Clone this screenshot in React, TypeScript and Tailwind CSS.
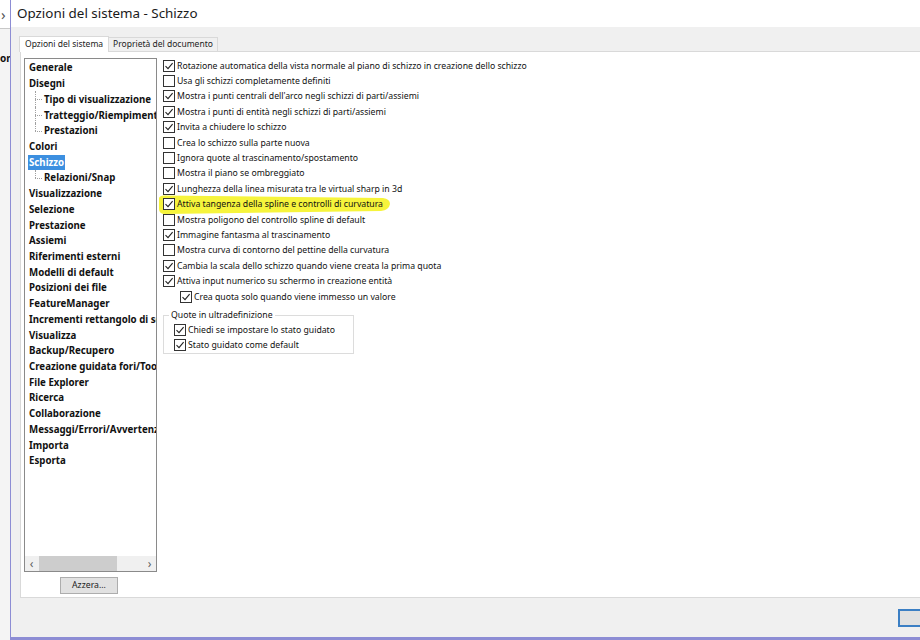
import React from "react";

const font = { fontFamily: '"Noto Sans", "Open Sans", Arial, sans-serif' };

type TreeItem = { label: string; level: 0 | 1; last?: boolean; selected?: boolean };

const tree: TreeItem[] = [
  { label: "Generale", level: 0 },
  { label: "Disegni", level: 0 },
  { label: "Tipo di visualizzazione", level: 1 },
  { label: "Tratteggio/Riempimento", level: 1 },
  { label: "Prestazioni", level: 1, last: true },
  { label: "Colori", level: 0 },
  { label: "Schizzo", level: 0, selected: true },
  { label: "Relazioni/Snap", level: 1, last: true },
  { label: "Visualizzazione", level: 0 },
  { label: "Selezione", level: 0 },
  { label: "Prestazione", level: 0 },
  { label: "Assiemi", level: 0 },
  { label: "Riferimenti esterni", level: 0 },
  { label: "Modelli di default", level: 0 },
  { label: "Posizioni dei file", level: 0 },
  { label: "FeatureManager", level: 0 },
  { label: "Incrementi rettangolo di selezione", level: 0 },
  { label: "Visualizza", level: 0 },
  { label: "Backup/Recupero", level: 0 },
  { label: "Creazione guidata fori/Toolbox", level: 0 },
  { label: "File Explorer", level: 0 },
  { label: "Ricerca", level: 0 },
  { label: "Collaborazione", level: 0 },
  { label: "Messaggi/Errori/Avvertenze", level: 0 },
  { label: "Importa", level: 0 },
  { label: "Esporta", level: 0 },
];

type Opt = { label: string; checked: boolean; indent?: boolean; marked?: boolean };

const options: Opt[] = [
  { label: "Rotazione automatica della vista normale al piano di schizzo in creazione dello schizzo", checked: true },
  { label: "Usa gli schizzi completamente definiti", checked: false },
  { label: "Mostra i punti centrali dell'arco negli schizzi di parti/assiemi", checked: true },
  { label: "Mostra i punti di entità negli schizzi di parti/assiemi", checked: true },
  { label: "Invita a chiudere lo schizzo", checked: true },
  { label: "Crea lo schizzo sulla parte nuova", checked: false },
  { label: "Ignora quote al trascinamento/spostamento", checked: false },
  { label: "Mostra il piano se ombreggiato", checked: false },
  { label: "Lunghezza della linea misurata tra le virtual sharp in 3d", checked: true },
  { label: "Attiva tangenza della spline e controlli di curvatura", checked: true, marked: true },
  { label: "Mostra poligono del controllo spline di default", checked: false },
  { label: "Immagine fantasma al trascinamento", checked: true },
  { label: "Mostra curva di contorno del pettine della curvatura", checked: false },
  { label: "Cambia la scala dello schizzo quando viene creata la prima quota", checked: true },
  { label: "Attiva input numerico su schermo in creazione entità", checked: true },
  { label: "Crea quota solo quando viene immesso un valore", checked: true, indent: true },
];

function CheckBox({ checked }: { checked: boolean }) {
  return (
    <span className="w-[12px] h-[12px] shrink-0 border border-[#333] bg-white flex items-center justify-center">
      {checked && (
        <svg width="10" height="10" viewBox="0 0 10 10">
          <path d="M1.5 5.2 L4 7.6 L8.6 2.2" fill="none" stroke="#222" strokeWidth="1.1" />
        </svg>
      )}
    </span>
  );
}

function OptionRow({ opt }: { opt: Opt }) {
  return (
    <div className={`relative h-[15.4px] flex items-center ${opt.indent ? "pl-[17px]" : ""}`}>
      {opt.marked && (
        <svg className="absolute left-[-6px] top-[-3px]" width="238" height="22" viewBox="0 0 238 22">
          <path d="M2 4 Q3 1 8 1.5 L226 4 Q233 5 233 10 Q232 16 224 17 L8 20 Q2 20 2 15 Z" fill="#f6f43c" />
        </svg>
      )}
      <span className="relative flex items-center gap-[2px]">
        <CheckBox checked={opt.checked} />
        <span className="text-[8.7px] leading-[12px] text-[#111] whitespace-nowrap">{opt.label}</span>
      </span>
    </div>
  );
}

function TreeRow({ item }: { item: TreeItem }) {
  return (
    <div className="h-[15.72px] flex items-center whitespace-nowrap">
      {item.level === 1 && (
        <span className="relative w-[15px] h-full shrink-0">
          <span
            className={`absolute left-[7px] top-0 border-l border-dotted border-[#a0a0a0] ${item.last ? "h-1/2" : "h-full"}`}
          />
          <span className="absolute left-[7px] top-1/2 w-[7px] border-t border-dotted border-[#a0a0a0]" />
        </span>
      )}
      <span
        className={`text-[9.7px] font-bold px-[1px] leading-[15px] ${item.selected ? "bg-[#3c8fe0] text-white" : "text-[#111]"}`}
      >
        {item.label}
      </span>
    </div>
  );
}

export default function App() {
  return (
    <div className="w-[920px] h-[640px] flex overflow-hidden bg-white" style={font}>
      {/* app behind the dialog */}
      <div className="w-[10px] shrink-0 flex flex-col bg-[#f4f4f4]">
        <div className="h-[29px] bg-white border-b border-[#c8c8c8] text-[15px] text-[#555] leading-[29px] pl-[1px]">›</div>
        <div className="h-[22px]" />
        <div className="text-[10px] font-bold text-[#111] leading-[14px] overflow-hidden">on</div>
        <div className="flex-1" />
      </div>

      {/* dialog window */}
      <div className="flex-1 flex flex-col border-l border-b-[3px] border-[#8d8dd4]">
        <div className="h-[27px] bg-white flex items-center pl-[6px] text-[13.4px] text-[#1a1a1a]">
          Opzioni del sistema - Schizzo
        </div>

        <div className="flex-1 flex flex-col bg-[#f0f0f0]">
          {/* tabs */}
          <div className="flex items-end pl-[8px] pt-[9px] h-[24px]">
            <div className="h-[16px] px-[5px] bg-white border border-b-0 border-[#d9d9d9] text-[8.5px] text-[#222] flex items-center relative top-[1px]">
              Opzioni del sistema
            </div>
            <div className="h-[14px] px-[4px] bg-[#f0f0f0] border border-l-0 border-b-0 border-[#d9d9d9] text-[8.5px] text-[#222] flex items-center">
              Proprietà del documento
            </div>
          </div>

          {/* tab panel */}
          <div className="ml-[9px] h-[547px] bg-white border border-r-0 border-[#d9d9d9] flex pt-[6px] pl-[3px]">
            <div className="w-[133px] shrink-0 flex flex-col">
              <div className="h-[514px] border border-[#8a8a8a] flex flex-col overflow-hidden">
                <div className="flex-1 flex flex-col pl-[3px] pt-[1px] overflow-hidden">
                  {tree.map((t) => (
                    <TreeRow key={t.label} item={t} />
                  ))}
                </div>
                <div className="h-[15px] bg-[#f0f0f0] flex items-center text-[#606060]">
                  <span className="w-[13px] text-center text-[12px] leading-[15px]">‹</span>
                  <span className="ml-[1px] w-[78px] h-[15px] bg-[#cdcdcd]" />
                  <span className="flex-1" />
                  <span className="w-[13px] text-center text-[12px] leading-[15px]">›</span>
                </div>
              </div>
              <div className="mt-[5px] ml-[36px] w-[58px] h-[17px] bg-[#e1e1e1] border border-[#adadad] text-[8.7px] text-[#222] flex items-center justify-center">
                Azzera...
              </div>
            </div>

            <div className="ml-[6px] flex flex-col">
              {options.map((o) => (
                <OptionRow key={o.label} opt={o} />
              ))}

              <div className="relative mt-[11px] w-[191px] h-[39px] border border-[#dcdcdc] pt-[6px] pl-[10px]">
                <span className="absolute left-[5px] top-[-6px] bg-white px-[2px] text-[8.7px] leading-[10px] text-[#111]">
                  Quote in ultradefinizione
                </span>
                <OptionRow opt={{ label: "Chiedi se impostare lo stato guidato", checked: true }} />
                <OptionRow opt={{ label: "Stato guidato come default", checked: true }} />
              </div>
            </div>
          </div>

          {/* footer */}
          <div className="flex-1 flex justify-end items-start pt-[11px]">
            <div className="w-[30px] h-[18px] border-2 border-[#3b7fc4] bg-[#e1e1e1] mr-[-8px]" />
          </div>
        </div>
      </div>
    </div>
  );
}
